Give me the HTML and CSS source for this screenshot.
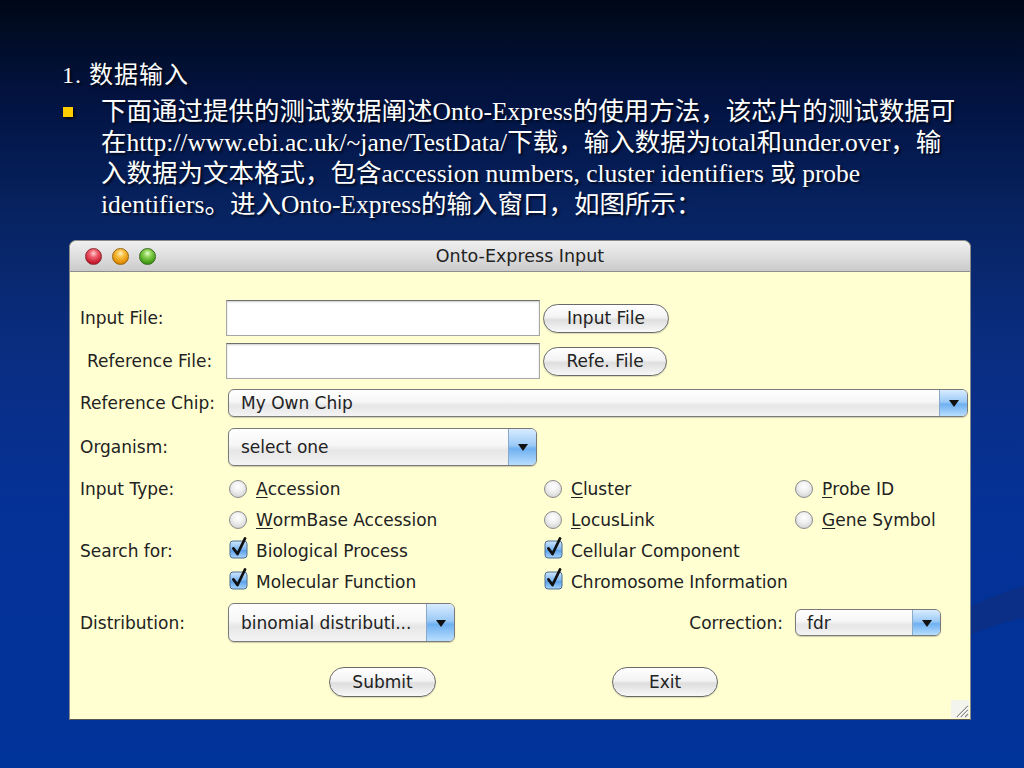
FILE: index.html
```html
<!DOCTYPE html>
<html>
<head>
    <meta charset="utf-8">
    <title>数据输入</title>
    <link rel="stylesheet" href="styles.css">
</head>
<body>
<div class="slide">
    <svg class="swoosh" width="60" height="70" viewBox="0 0 60 70">
        <path d="M0 28 C20 18 40 10 60 4 L60 36 C40 40 20 46 0 56 Z" fill="#0b2f86"/>
    </svg>

    <h1 class="heading">1. 数据输入</h1>
    <ul class="points">
        <li>下面通过提供的测试数据阐述Onto-Express的使用方法，该芯片的测试数据可<br>在http://www.ebi.ac.uk/~jane/TestData/下载，输入数据为total和under.over，输<br>入数据为文本格式，包含accession numbers, cluster identifiers 或 probe<br>identifiers。进入Onto-Express的输入窗口，如图所示：</li>
    </ul>

    <div class="window">
        <div class="titlebar">
            <div class="lights">
                <span class="light red"></span>
                <span class="light amber"></span>
                <span class="light green"></span>
            </div>
            <span class="title">Onto-Express Input</span>
            <span></span>
        </div>

        <div class="win-body">
            <div class="row row-file">
                <label>Input File:</label>
                <div class="ctl">
                    <div class="field"></div>
                    <button class="pill pill-input">Input File</button>
                </div>
            </div>

            <div class="row row-file gap7">
                <label class="indent">Reference File:</label>
                <div class="ctl">
                    <div class="field"></div>
                    <button class="pill pill-refe">Refe. File</button>
                </div>
            </div>

            <div class="row row-chip gap10">
                <label>Reference Chip:</label>
                <div class="ctl">
                    <div class="combo combo-chip"><span class="combo-text">My Own Chip</span><span class="combo-arrow"></span></div>
                </div>
            </div>

            <div class="row row-org gap11">
                <label>Organism:</label>
                <div class="ctl">
                    <div class="combo combo-org"><span class="combo-text">select one</span><span class="combo-arrow"></span></div>
                </div>
            </div>

            <div class="row row-opt gap7">
                <label>Input Type:</label>
                <div class="opts">
                    <span class="opt"><i class="radio"></i><u>A</u>ccession</span>
                    <span class="opt"><i class="radio"></i><u>C</u>luster</span>
                    <span class="opt"><i class="radio"></i><u>P</u>robe ID</span>
                </div>
            </div>
            <div class="row row-opt">
                <label></label>
                <div class="opts">
                    <span class="opt"><i class="radio"></i><u>W</u>ormBase Accession</span>
                    <span class="opt"><i class="radio"></i><u>L</u>ocusLink</span>
                    <span class="opt"><i class="radio"></i><u>G</u>ene Symbol</span>
                </div>
            </div>
            <div class="row row-opt">
                <label>Search for:</label>
                <div class="opts">
                    <span class="opt"><svg class="check" width="20" height="22" viewBox="0 0 20 22"><defs><linearGradient id="cb" x1="0" y1="0" x2="0" y2="1"><stop offset="0" stop-color="#cfe7ff"/><stop offset=".5" stop-color="#7cb6f0"/><stop offset=".55" stop-color="#5a9fe8"/><stop offset="1" stop-color="#a8d4ff"/></linearGradient></defs><rect x="1" y="4" width="17" height="17" rx="3" fill="url(#cb)" stroke="#4f6f93"/><path d="M4.5 11.5 L8.5 17 L16 1.5" fill="none" stroke="#111" stroke-width="2.8" stroke-linecap="round" stroke-linejoin="round"/></svg>Biological Process</span>
                    <span class="opt"><svg class="check" width="20" height="22" viewBox="0 0 20 22"><rect x="1" y="4" width="17" height="17" rx="3" fill="url(#cb)" stroke="#4f6f93"/><path d="M4.5 11.5 L8.5 17 L16 1.5" fill="none" stroke="#111" stroke-width="2.8" stroke-linecap="round" stroke-linejoin="round"/></svg>Cellular Component</span>
                </div>
            </div>
            <div class="row row-opt">
                <label></label>
                <div class="opts">
                    <span class="opt"><svg class="check" width="20" height="22" viewBox="0 0 20 22"><rect x="1" y="4" width="17" height="17" rx="3" fill="url(#cb)" stroke="#4f6f93"/><path d="M4.5 11.5 L8.5 17 L16 1.5" fill="none" stroke="#111" stroke-width="2.8" stroke-linecap="round" stroke-linejoin="round"/></svg>Molecular Function</span>
                    <span class="opt"><svg class="check" width="20" height="22" viewBox="0 0 20 22"><rect x="1" y="4" width="17" height="17" rx="3" fill="url(#cb)" stroke="#4f6f93"/><path d="M4.5 11.5 L8.5 17 L16 1.5" fill="none" stroke="#111" stroke-width="2.8" stroke-linecap="round" stroke-linejoin="round"/></svg>Chromosome Information</span>
                </div>
            </div>

            <div class="row row-dist gap6">
                <label>Distribution:</label>
                <div class="ctl">
                    <div class="combo combo-dist"><span class="combo-text">binomial distributi...</span><span class="combo-arrow"></span></div>
                    <span class="corr-label">Correction:</span>
                    <div class="combo combo-corr"><span class="combo-text">fdr</span><span class="combo-arrow"></span></div>
                </div>
            </div>

            <div class="actions">
                <button class="pill pill-submit">Submit</button>
                <button class="pill pill-exit">Exit</button>
            </div>
        </div>

        <svg class="grip" width="18" height="18" viewBox="0 0 18 18">
            <path d="M6 17 L17 6 M10 17 L17 10 M14 17 L17 14" stroke="#8a8a8a" stroke-width="1.2"/>
            <path d="M7 17 L17 7 M11 17 L17 11" stroke="#fff" stroke-width="1"/>
        </svg>
    </div>
</div>
</body>
</html>
```

FILE: styles.css
```css
html, body { margin: 0; padding: 0; }
body { width: 1024px; height: 768px; overflow: hidden; background: linear-gradient(#000817 0%, #021444 14%, #072361 28%, #0a2d80 45%, #053196 65%, #003399 100%); }

.slide { position: relative; height: 768px; padding: 60px 0 0 62px; box-sizing: border-box; font-family: "Liberation Serif", "Noto Sans CJK SC", serif; color: #fff; text-shadow: 2px 2px 2px rgba(0, 0, 0, .65); }
.swoosh { position: absolute; right: 0; top: 582px; }

.heading { margin: 0 0 5px 0; font-size: 24px; font-weight: normal; line-height: 31px; letter-spacing: 1px; }
.points { list-style: none; margin: 0; padding: 0; }
.points li { position: relative; padding-left: 39px; font-size: 25.5px; line-height: 31px; white-space: nowrap; }
.points li::before { content: ""; position: absolute; left: 1px; top: 11px; width: 10px; height: 10px; background: #ffcc00; box-shadow: 2px 2px 2px rgba(0, 0, 0, .7); }

/* mac window */
.window { position: relative; width: 900px; height: 478px; margin: 20px 0 0 7px; border: 1px solid #8a8a8a; border-bottom-color: #555; border-radius: 7px 7px 0 0; background: #ffffd2; text-shadow: none; color: #222; font-family: "DejaVu Sans", sans-serif; font-size: 17px; }
.titlebar { display: grid; grid-template-columns: 1fr auto 1fr; align-items: center; height: 30px; border-bottom: 1px solid #8e8e8e; border-radius: 7px 7px 0 0; background: linear-gradient(#f0f0f0, #dedede 50%, #cbcbcb); }
.lights { display: flex; gap: 10px; padding-left: 15px; }
.light { width: 17px; height: 17px; border-radius: 50%; box-sizing: border-box; }
.red { background: radial-gradient(circle at 50% 30%, #ffd0d0 0, #f06070 30%, #c41628 75%, #8a0e1a); border: 1px solid #8a2a30; }
.amber { background: radial-gradient(circle at 50% 30%, #fff0c0 0, #f8c040 30%, #e08a00 75%, #9a5a00); border: 1px solid #9a6410; }
.green { background: radial-gradient(circle at 50% 30%, #e0ffc8 0, #8ad050 30%, #3c9a10 75%, #2a6a08); border: 1px solid #3a6a20; }
.title { font-size: 17.5px; color: #222; }

.win-body { padding: 28px 2px 0 10px; }
.row { display: grid; grid-template-columns: 146px 1fr; align-items: center; }
.row label { white-space: nowrap; }
.row .indent { padding-left: 7px; }
.gap6 { margin-top: 6px; }
.gap7 { margin-top: 7px; }
.gap10 { margin-top: 10px; }
.gap11 { margin-top: 11px; }
.ctl { display: flex; align-items: center; }

.row-file { height: 36px; }
.field { width: 314px; height: 36px; box-sizing: border-box; background: #fff; border: 1px solid #a8a8a8; border-top-color: #6e6e6e; box-shadow: inset 0 1px 2px rgba(0, 0, 0, .2); }

.pill { height: 29px; margin-left: 3px; padding: 0; border: 1px solid #6a6a6a; border-radius: 15px; background: linear-gradient(#ffffff, #f3f3f3 45%, #dedede 55%, #f8f8f8); color: #222; font-family: "DejaVu Sans", sans-serif; font-size: 17px; box-shadow: 0 1px 1px rgba(0, 0, 0, .15); }
.pill-input { width: 126px; }
.pill-refe { width: 124px; }

.combo { display: flex; box-sizing: border-box; margin-left: 2px; border: 1px solid #7a7a7a; border-radius: 6px; overflow: hidden; background: linear-gradient(#ffffff, #f6f6f6 45%, #e6e6e6 60%, #f4f4f4); box-shadow: 0 1px 1px rgba(0, 0, 0, .2); }
.combo-text { flex: 1; padding-left: 12px; align-self: center; white-space: nowrap; }
.combo-arrow { position: relative; width: 27px; border-left: 1px solid #8aa8c8; background: linear-gradient(#d8ecff, #9ccaf6 45%, #6fb0f0 55%, #b8deff); }
.combo-arrow::after { content: ""; position: absolute; left: 50%; top: 50%; margin: -3px 0 0 -5px; border-left: 5px solid transparent; border-right: 5px solid transparent; border-top: 7px solid #111; }

.row-chip { height: 28px; }
.combo-chip { width: 740px; height: 28px; }
.row-org { height: 38px; }
.combo-org { width: 309px; height: 38px; }

.row-opt { height: 31px; }
.opts { display: grid; grid-template-columns: 315px 251px 1fr; align-items: center; }
.opt { display: flex; align-items: center; white-space: nowrap; padding-left: 3px; }
.radio { width: 18px; height: 18px; margin-right: 9px; box-sizing: border-box; border: 1px solid #8c8c8c; border-radius: 50%; background: radial-gradient(circle at 50% 35%, #ffffff 0, #f0f0f0 40%, #c8c8c8 100%); }
.opt u { text-decoration-thickness: 1px; text-underline-offset: 2px; }
.check { margin: -6px 7px 0 0; }

.row-dist { height: 39px; }
.combo-dist { width: 227px; height: 39px; }
.corr-label { margin-left: auto; margin-right: 10px; }
.combo-corr { width: 146px; height: 27px; margin-right: 27px; }
.combo-corr .combo-text { padding-left: 11px; }

.actions { display: flex; gap: 176px; margin-top: 25px; padding-left: 249px; }
.pill-submit { width: 107px; height: 30px; margin: 0; }
.pill-exit { width: 106px; height: 30px; margin: 0; }

.grip { position: absolute; right: 1px; bottom: 1px; background: #f4f4ee; }
```
